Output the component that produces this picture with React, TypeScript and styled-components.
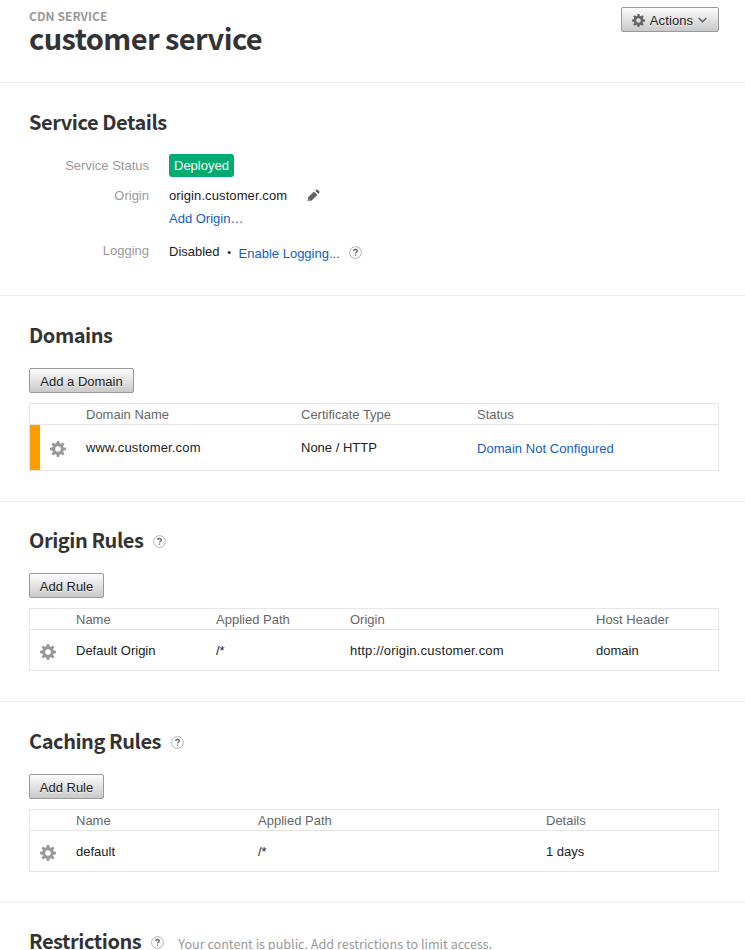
import React from "react";
import styled, { createGlobalStyle } from "styled-components";

const GlobalStyle = createGlobalStyle`
  html, body { margin: 0; padding: 0; background: #fff; }
  body { font: 13px/20px "Liberation Sans", Arial, sans-serif; color: #222; height: 950px; overflow: hidden; }
  * { box-sizing: border-box; }
`;

const headingFont = `"Noto Sans CJK SC", "Noto Sans", sans-serif`;

const Page = styled.main`
  width: 745px;
  height: 950px;
  overflow: hidden;
`;

const Header = styled.header`
  display: flex;
  justify-content: space-between;
  align-items: flex-start;
  height: 82px;
  padding: 7px 26px 0 29px;
`;

const TitleGroup = styled.div`
  padding-top: 1px;
  font-family: ${headingFont};
`;

const Eyebrow = styled.div`
  color: #999;
  font-size: 12px;
  font-weight: 700;
  line-height: 16px;
  letter-spacing: 0.07px;
`;

const Title = styled.h1`
  margin: 0;
  color: #333;
  font-size: 29px;
  font-weight: 700;
  line-height: 26px;
  letter-spacing: -0.58px;
`;

const Section = styled.section<{ $height?: number; $top?: number }>`
  height: ${(p) => (p.$height ? `${p.$height}px` : "auto")};
  padding: ${(p) => p.$top ?? 24}px 26px 0 29px;
  border-top: 1px solid #ececec;
`;

const SectionHead = styled.div`
  display: flex;
  align-items: center;
  height: 30px;
`;

const SectionTitle = styled.h2`
  margin: 0;
  color: #333;
  font-family: ${headingFont};
  font-size: 20px;
  font-weight: 700;
  line-height: 30px;
  letter-spacing: -0.45px;
`;

const HelpSlot = styled.span`
  display: flex;
  margin: 2px 0 0 10px;
`;

const Note = styled.span`
  margin: 5px 0 0 14px;
  color: #999;
  font-family: ${headingFont};
  font-size: 12.6px;
  line-height: 20px;
`;

const Button = styled.button<{ $width: number }>`
  display: flex;
  align-items: center;
  justify-content: center;
  flex: none;
  width: ${(p) => p.$width}px;
  height: 25px;
  padding: 2px 0 0;
  border: 1px solid #999;
  border-radius: 2px;
  background: linear-gradient(#fcfcfc, #c9c9c9);
  color: #222;
  font: 13px/20px "Liberation Sans", Arial, sans-serif;
  text-shadow: 0 1px 0 rgba(255, 255, 255, 0.6);
`;

const ActionsLabel = styled.span`
  margin: 0 5px 0 5px;
  letter-spacing: 0.1px;
`;

const ActionsButton = styled(Button)`
  padding-top: 3px;
  padding-right: 1px;

  svg {
    margin-top: -2px;
  }
`;

const AddButton = styled(Button)`
  margin-top: 18px;
  padding-top: 3px;
`;

const Details = styled.div`
  display: grid;
  grid-template-columns: 120px 1fr;
  column-gap: 20px;
  grid-template-rows: 30px 23px 33px 26px;
  padding-top: 17px;
`;

const Label = styled.div<{ $lift?: number }>`
  margin-top: ${(p) => -(p.$lift ?? 0)}px;
  color: #999;
  text-align: right;
  line-height: 24px;
`;

const Value = styled.div`
  display: flex;
  align-items: flex-start;
  line-height: 24px;
`;

const Wide = styled.span<{ $spacing: number }>`
  letter-spacing: ${(p) => p.$spacing}px;
`;

const Badge = styled.span`
  height: 23px;
  padding: 0 5px;
  border-radius: 3px;
  background: #00ab6f;
  color: #fff;
  line-height: 24px;
`;

const Link = styled.a<{ $drop?: number }>`
  margin-top: ${(p) => p.$drop ?? 0}px;
  color: #1160c0;
  text-decoration: none;
`;

const PencilSlot = styled.span`
  display: flex;
  margin: 5px 0 0 20px;
`;

const Dot = styled.span`
  width: 19px;
  text-align: center;
  font-size: 11px;
`;

const InlineHelp = styled.span`
  display: flex;
  margin: 6px 0 0 9px;
`;

const Table = styled.div`
  margin-top: 10px;
  border: 1px solid #e5e5e5;
`;

const Row = styled.div<{ $columns: string; $height: number }>`
  display: grid;
  grid-template-columns: ${(p) => p.$columns};
  align-items: center;
  height: ${(p) => p.$height}px;
`;

const HeadRow = styled(Row)`
  border-bottom: 1px solid #e5e5e5;
  color: #666;
`;

const Cell = styled.div<{ $drop?: number }>`
  padding-top: ${(p) => p.$drop ?? 0}px;
  white-space: nowrap;
`;

const HeadCell = styled(Cell)`
  padding-top: 2px;
  line-height: 18px;
`;

const StatusBar = styled.div`
  align-self: stretch;
  width: 10px;
  background: #ff9c00;
`;

const GearCell = styled.div<{ $top?: number }>`
  display: flex;
  padding: ${(p) => p.$top ?? 4}px 0 0 10px;
`;

const angles = [0, 45, 90, 135];

function Gear({ size, color }: { size: number; color: string }) {
  return (
    <svg width={size} height={size} viewBox="0 0 16 16">
      {angles.map((a) => (
        <path key={a} d="M6.8 0h2.4l.5 3.6h-3.4zM6.8 16h2.4l.5-3.6h-3.4z" fill={color} transform={`rotate(${a} 8 8)`} />
      ))}
      <circle cx="8" cy="8" r="4.35" fill="none" stroke={color} strokeWidth="3.1" />
    </svg>
  );
}

function Help() {
  return (
    <svg width="13" height="13" viewBox="0 0 13 13">
      <circle cx="6.5" cy="6.5" r="5.9" fill="#fff" stroke="#aaa" strokeWidth="0.9" />
      <path d="M4.7 5.1C4.7 3 8.3 3 8.3 5C8.3 6.2 6.5 6.2 6.5 7.6M6.5 8.5V9.8" fill="none" stroke="#666" strokeWidth="1.3" />
    </svg>
  );
}

function Pencil() {
  return (
    <svg width="13" height="13" viewBox="0 0 13 13" fill="#606060">
      <path d="M.5 12.3L1.3 8.1L7.1 2.6L10.4 5.9L4.7 11.4ZM8.2 1.8L9.4.7Q10.1.2 10.8.8L12.3 2.3Q12.9 3 12.3 3.7L11.2 4.8Z" />
      <path d="M1.7 9.9L3 11.2L1.4 11.5Z" fill="#fff" />
    </svg>
  );
}

function Chevron() {
  return (
    <svg width="9" height="6" viewBox="0 0 9 6">
      <path d="M.7 1L4.5 4.8L8.3 1" fill="none" stroke="#666" strokeWidth="1.6" />
    </svg>
  );
}

const domainColumns = "10px 46px 215px 176px 1fr";
const originColumns = "46px 140px 134px 246px 1fr";
const cachingColumns = "46px 182px 288px 1fr";

export default function App() {
  return (
    <Page>
      <GlobalStyle />
      <Header>
        <TitleGroup>
          <Eyebrow>CDN SERVICE</Eyebrow>
          <Title>customer service</Title>
        </TitleGroup>
        <ActionsButton $width={98}>
          <Gear size={13} color="#666" />
          <ActionsLabel>Actions</ActionsLabel>
          <Chevron />
        </ActionsButton>
      </Header>

      <Section $height={213}>
        <SectionHead>
          <SectionTitle>Service Details</SectionTitle>
        </SectionHead>
        <Details>
          <Label>Service Status</Label>
          <Value><Badge>Deployed</Badge></Value>
          <Label>Origin</Label>
          <Value>
            <Wide $spacing={0.1}>origin.customer.com</Wide>
            <PencilSlot><Pencil /></PencilSlot>
          </Value>
          <span />
          <Value><Link href="#">Add Origin…</Link></Value>
          <Label $lift={1}>Logging</Label>
          <Value>
            Disabled
            <Dot>•</Dot>
            <Link href="#" $drop={2}>Enable Logging...</Link>
            <InlineHelp><Help /></InlineHelp>
          </Value>
        </Details>
      </Section>

      <Section $height={206}>
        <SectionHead>
          <SectionTitle>Domains</SectionTitle>
        </SectionHead>
        <AddButton $width={105}>Add a Domain</AddButton>
        <Table>
          <HeadRow $columns={domainColumns} $height={21}>
            <span />
            <span />
            <HeadCell>Domain Name</HeadCell>
            <HeadCell>Certificate Type</HeadCell>
            <HeadCell>Status</HeadCell>
          </HeadRow>
          <Row $columns={domainColumns} $height={45}>
            <StatusBar />
            <GearCell $top={3}><Gear size={16} color="#999" /></GearCell>
            <Cell><Wide $spacing={0.17}>www.customer.com</Wide></Cell>
            <Cell>None / HTTP</Cell>
            <Cell $drop={2}><Wide as={Link} href="#" $spacing={0.05}>Domain Not Configured</Wide></Cell>
          </Row>
        </Table>
      </Section>

      <Section $height={200} $top={23}>
        <SectionHead>
          <SectionTitle>Origin Rules</SectionTitle>
          <HelpSlot><Help /></HelpSlot>
        </SectionHead>
        <AddButton $width={75}>Add Rule</AddButton>
        <Table>
          <HeadRow $columns={originColumns} $height={21}>
            <span />
            <HeadCell>Name</HeadCell>
            <HeadCell>Applied Path</HeadCell>
            <HeadCell>Origin</HeadCell>
            <HeadCell>Host Header</HeadCell>
          </HeadRow>
          <Row $columns={originColumns} $height={40}>
            <GearCell><Gear size={16} color="#999" /></GearCell>
            <Cell $drop={2}>Default Origin</Cell>
            <Cell $drop={2}>/*</Cell>
            <Cell $drop={2}><Wide $spacing={0.19}>http://origin.customer.com</Wide></Cell>
            <Cell $drop={2}>domain</Cell>
          </Row>
        </Table>
      </Section>

      <Section $height={201}>
        <SectionHead>
          <SectionTitle>Caching Rules</SectionTitle>
          <HelpSlot><Help /></HelpSlot>
        </SectionHead>
        <AddButton $width={75}>Add Rule</AddButton>
        <Table>
          <HeadRow $columns={cachingColumns} $height={21}>
            <span />
            <HeadCell>Name</HeadCell>
            <HeadCell>Applied Path</HeadCell>
            <HeadCell>Details</HeadCell>
          </HeadRow>
          <Row $columns={cachingColumns} $height={40}>
            <GearCell $top={3}><Gear size={16} color="#999" /></GearCell>
            <Cell $drop={2}>default</Cell>
            <Cell $drop={2}>/*</Cell>
            <Cell $drop={2}>1 days</Cell>
          </Row>
        </Table>
      </Section>

      <Section $top={23}>
        <SectionHead>
          <SectionTitle>Restrictions</SectionTitle>
          <HelpSlot><Help /></HelpSlot>
          <Note>Your content is public. Add restrictions to limit access.</Note>
        </SectionHead>
      </Section>
    </Page>
  );
}
